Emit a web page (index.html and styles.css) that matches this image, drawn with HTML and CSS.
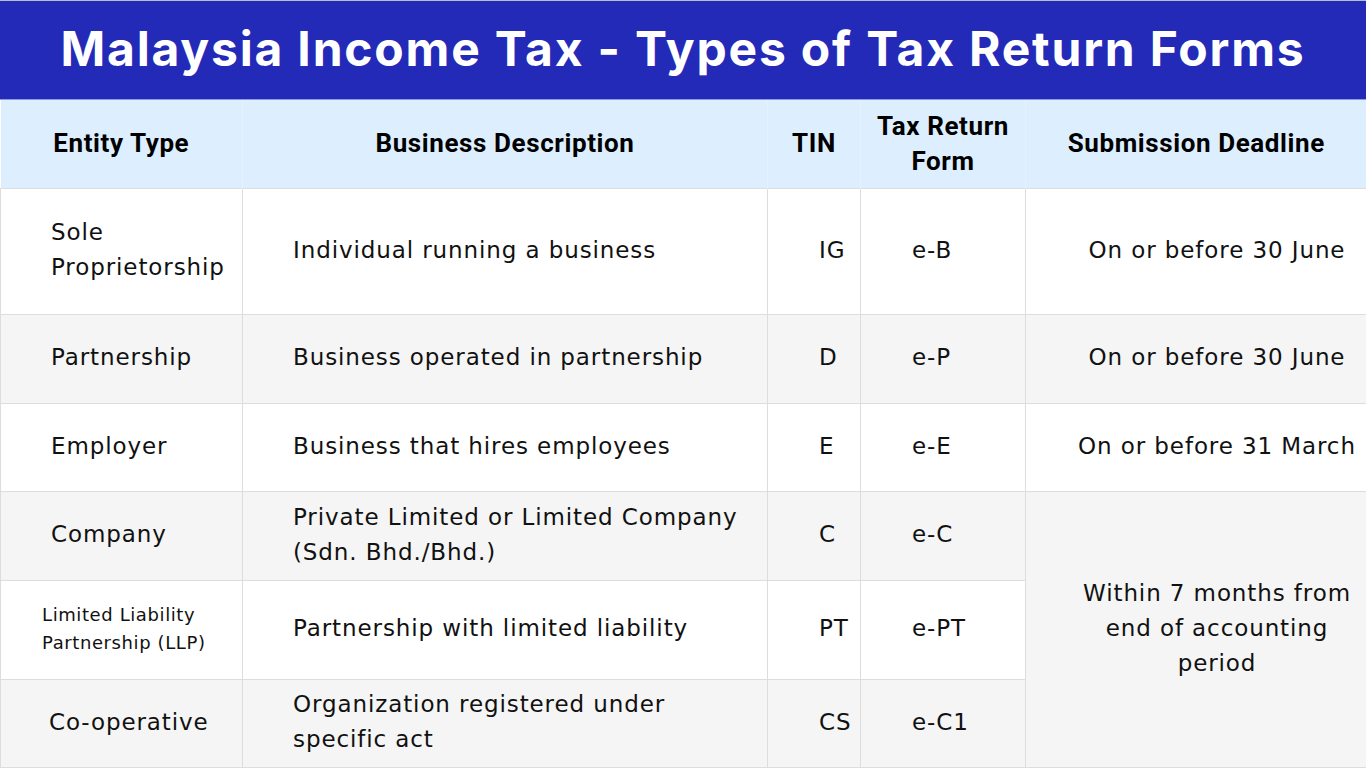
FILE: index.html
```html
<!DOCTYPE html>
<html lang="en">
<head>
<meta charset="utf-8">
<title>Malaysia Income Tax - Types of Tax Return Forms</title>
<link rel="stylesheet" href="styles.css">
</head>
<body>
<div class="page">
  <header class="title-bar">
    <h1 class="title">Malaysia Income Tax - Types of Tax Return Forms</h1>
  </header>
  <table class="tax-table">
    <colgroup>
      <col class="c-entity">
      <col class="c-desc">
      <col class="c-tin">
      <col class="c-form">
      <col class="c-deadline">
    </colgroup>
    <thead>
      <tr class="head-row">
        <th>Entity Type</th>
        <th>Business Description</th>
        <th>TIN</th>
        <th>Tax Return<br>Form</th>
        <th>Submission Deadline</th>
      </tr>
    </thead>
    <tbody>
      <tr class="row r1">
        <td class="entity">Sole<br>Proprietorship</td>
        <td class="desc">Individual running a business</td>
        <td class="tin">IG</td>
        <td class="form">e-B</td>
        <td class="deadline">On or before 30 June</td>
      </tr>
      <tr class="row r2 alt">
        <td class="entity">Partnership</td>
        <td class="desc">Business operated in partnership</td>
        <td class="tin">D</td>
        <td class="form">e-P</td>
        <td class="deadline">On or before 30 June</td>
      </tr>
      <tr class="row r3">
        <td class="entity">Employer</td>
        <td class="desc">Business that hires employees</td>
        <td class="tin">E</td>
        <td class="form">e-E</td>
        <td class="deadline">On or before 31 March</td>
      </tr>
      <tr class="row r4 alt">
        <td class="entity">Company</td>
        <td class="desc">Private Limited or Limited Company<br>(Sdn. Bhd./Bhd.)</td>
        <td class="tin">C</td>
        <td class="form">e-C</td>
        <td class="deadline merged" rowspan="3">Within 7 months from<br>end of accounting<br>period</td>
      </tr>
      <tr class="row r5">
        <td class="entity small">Limited Liability<br>Partnership (LLP)</td>
        <td class="desc">Partnership with limited liability</td>
        <td class="tin">PT</td>
        <td class="form">e-PT</td>
      </tr>
      <tr class="row r6 alt">
        <td class="entity coop">Co-operative</td>
        <td class="desc">Organization registered under<br>specific act</td>
        <td class="tin">CS</td>
        <td class="form">e-C1</td>
      </tr>
    </tbody>
  </table>
</div>
</body>
</html>
```

FILE: styles.css
```css
* { box-sizing: border-box; }
html, body { margin: 0; padding: 0; background: #ffffff; }
.page {
  width: 1366px;
  height: 768px;
  overflow: hidden;
  font-family: "DejaVu Sans", "Open Sans", sans-serif;
  color: #111111;
}
.title-bar {
  height: 100px;
  background: #232ab8;
  border-top: 1px solid #b9bcd8;
  border-bottom: 1px solid #8f98e0;
  display: flex;
  align-items: center;
  justify-content: center;
}
.title {
  margin: 0;
  padding-bottom: 4px;
  font-family: "Inter", "Open Sans", sans-serif;
  font-weight: 700;
  font-size: 48px;
  color: #ffffff;
  letter-spacing: 1.8px;
}
.tax-table {
  width: 1366px;
  table-layout: fixed;
  border-collapse: collapse;
}
.c-entity { width: 242px; }
.c-desc { width: 525px; }
.c-tin { width: 93px; }
.c-form { width: 165px; }
.c-deadline { width: 341px; }

.head-row { height: 88px; background: #ddeffe; }
.head-row th {
  font-family: "Roboto", "Liberation Sans", sans-serif;
  font-weight: 700;
  font-size: 26px;
  line-height: 35px;
  letter-spacing: 0.6px;
  color: #000000;
  text-align: center;
  padding: 0;
  border-left: 1px solid #e6f1fc;
}
.head-row th:first-child { border-left: none; }

.row td {
  font-size: 23px;
  line-height: 35px;
  letter-spacing: 0.9px;
  border: 1px solid #dddddd;
  padding: 0;
  padding-bottom: 2px;
  vertical-align: middle;
  color: #111111;
}
.row { background: #ffffff; }
.row.alt { background: #f5f5f5; }
.r1 { height: 126px; }
.r2 { height: 89px; }
.r3 { height: 88px; }
.r4 { height: 89px; }
.r5 { height: 99px; }
.r6 { height: 88px; }

.row .entity { padding-left: 50px; }
.row .entity.small { padding-left: 41px; font-size: 18px; line-height: 28px; letter-spacing: 0.6px; }
.row .entity.coop { padding-left: 48px; }
.row .desc { padding-left: 50px; }
.row .tin { padding-left: 51px; }
.row .form { padding-left: 51px; }
.row .deadline { text-align: center; padding-left: 42px; }
.row .merged { background: #f5f5f5; }
```
